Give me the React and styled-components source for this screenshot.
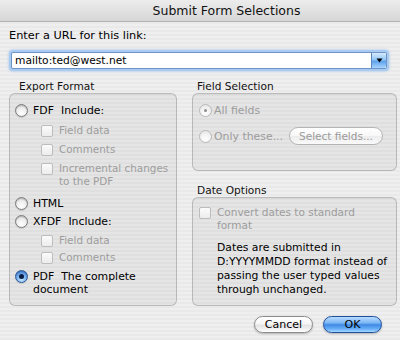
import React from 'react';
import styled, { createGlobalStyle } from 'styled-components';

const GlobalStyle = createGlobalStyle`
  *, *::before, *::after { box-sizing: border-box; }
  html, body { margin: 0; padding: 0; }
  body {
    width: 400px;
    height: 340px;
    overflow: hidden;
    font-family: "DejaVu Sans", "Liberation Sans", sans-serif;
    -webkit-font-smoothing: antialiased;
  }
`;

const Window = styled.div`
  width: 400px;
  height: 340px;
  display: flex;
  flex-direction: column;
  color: #000;
  background: repeating-linear-gradient(
    to bottom,
    #efefef 0px,
    #efefef 2px,
    #e9e9e9 2px,
    #e9e9e9 4px
  );
`;

const TitleBar = styled.div`
  flex: none;
  height: 22px;
  padding-left: 53px;
  display: flex;
  align-items: center;
  justify-content: center;
  font-size: 12.5px;
  color: #111;
  border-bottom: 1px solid #b2b2b2;
  background: linear-gradient(#ededed, #d6d6d6);
`;

const Body = styled.div`
  display: flex;
  flex-direction: column;
  padding: 7px 0 0 9px;
`;

const UrlLabel = styled.div`
  font-size: 11.3px;
  line-height: 14px;
`;

const Combo = styled.div`
  margin: 9px 0 0 2px;
  width: 376px;
  height: 17px;
  display: flex;
  align-items: stretch;
  background: #fff;
  border: 1px solid #6f93c4;
  border-radius: 2px;
  box-shadow: 0 0 0 2px #a9cbf1, 0 0 2px 3px rgba(150, 190, 235, 0.45);
`;

const ComboText = styled.div`
  flex: 1;
  padding-left: 3px;
  font-size: 10.7px;
  line-height: 15px;
`;

const ComboButton = styled.div`
  width: 15px;
  flex: none;
  display: flex;
  align-items: center;
  justify-content: center;
  border-left: 1px solid #5c86c2;
  border-radius: 0 2px 2px 0;
  background: linear-gradient(#d4ebff 0%, #93c6f5 45%, #5fa2ea 55%, #a6d4ff 100%);
`;

const Columns = styled.div`
  display: flex;
  gap: 15px;
  margin-top: 10px;
`;

const Column = styled.div`
  display: flex;
  flex-direction: column;
  width: ${(p) => p.$width}px;
  flex: none;
`;

const GroupLabel = styled.div`
  font-size: 10.6px;
  line-height: 14px;
  padding-left: ${(p) => p.$indent}px;
  margin-top: ${(p) => p.$top || 0}px;
  color: #111;
`;

const GroupBox = styled.div`
  height: ${(p) => p.$height}px;
  display: flex;
  flex-direction: column;
  align-items: flex-start;
  padding: ${(p) => p.$padTop}px 0 0 ${(p) => p.$padLeft ?? 6}px;
  border: 1px solid rgba(0, 0, 0, 0.19);
  border-radius: 6px;
  background: rgba(0, 0, 0, 0.04);
  box-shadow: inset 0 1px 1px rgba(0, 0, 0, 0.04);
`;

const RadioRow = styled.div`
  display: flex;
  align-items: flex-start;
  gap: ${(p) => p.$gap ?? 5}px;
  margin-top: ${(p) => p.$top || 0}px;
  font-size: 10.9px;
  line-height: 13px;
  color: ${(p) => (p.$disabled ? '#9c9c9c' : '#000')};
`;

const RadioCircle = styled.span`
  flex: none;
  width: 13px;
  height: 13px;
  margin-top: 0;
  border-radius: 50%;
  display: flex;
  align-items: center;
  justify-content: center;
  border: 1px solid
    ${(p) => (p.$checked && !p.$disabled ? '#2c5594' : p.$disabled ? '#b9b9b9' : '#7b7b7b')};
  background: ${(p) =>
    p.$checked && !p.$disabled
      ? 'radial-gradient(circle at 50% 80%, #c4e6ff 0%, #78b4f0 45%, #3572cf 100%)'
      : p.$disabled
      ? 'radial-gradient(circle at 50% 75%, #ffffff 0%, #f1f1f1 55%, #dedede 100%)'
      : 'radial-gradient(circle at 50% 75%, #ffffff 0%, #ececec 55%, #c9c9c9 100%)'};
  box-shadow: ${(p) => (p.$disabled ? 'none' : 'inset 0 1px 1px rgba(0,0,0,0.18), 0 1px 1px rgba(0,0,0,0.12)')};

  &::after {
    content: '';
    display: ${(p) => (p.$checked ? 'block' : 'none')};
    width: ${(p) => (p.$disabled ? 3 : 5)}px;
    height: ${(p) => (p.$disabled ? 3 : 5)}px;
    border-radius: 50%;
    background: ${(p) => (p.$disabled ? '#8d8d8d' : '#0b1c45')};
  }
`;

const CheckRow = styled.div`
  display: flex;
  align-items: flex-start;
  gap: 6px;
  margin-top: ${(p) => p.$top || 0}px;
  margin-left: ${(p) => p.$indent || 0}px;
  font-size: ${(p) => p.$size || 10.4}px;
  line-height: ${(p) => p.$lh || 13}px;
  color: #9d9d9d;
`;

const CheckBox = styled.span`
  flex: none;
  width: 12px;
  height: 12px;
  margin-top: 0.5px;
  border: 1px solid #bdbdbd;
  border-radius: 2px;
  background: linear-gradient(#fbfbfb, #ececec);
`;

const Gap = styled.span`
  display: inline-block;
  width: ${(p) => p.$w}px;
`;

const SmallButton = styled.div`
  margin-left: 4px;
  margin-top: -3px;
  height: 18px;
  padding: 0 9px;
  display: flex;
  align-items: center;
  border: 1px solid #b4b4b4;
  border-radius: 9px;
  background: linear-gradient(#ffffff 0%, #f7f7f7 50%, #ececec 51%, #fafafa 100%);
  color: #9a9a9a;
  font-size: 10.5px;
`;

const Note = styled.div`
  margin: 8px 0 0 18px;
  font-size: 10.8px;
  line-height: 14.2px;
  color: #000;
`;

const ButtonRow = styled.div`
  display: flex;
  justify-content: flex-end;
  gap: 10px;
  margin-top: 10px;
  padding-right: 18px;
`;

const PushButton = styled.div`
  width: 59px;
  height: 17px;
  display: flex;
  align-items: center;
  justify-content: center;
  border-radius: 9px;
  font-size: 11px;
  color: #000;
  border: 1px solid ${(p) => (p.$primary ? '#1f4f9c' : '#8a8a8a')};
  background: ${(p) =>
    p.$primary
      ? 'linear-gradient(#b9dcff 0%, #7ab6f4 40%, #3f89e4 52%, #69b0fa 80%, #a8d8ff 100%)'
      : 'linear-gradient(#ffffff 0%, #f6f6f6 45%, #e3e3e3 55%, #f4f4f4 85%, #ffffff 100%)'};
  box-shadow: 0 1px 2px rgba(0, 0, 0, 0.25);
`;

export default function App() {
  return (
    <>
      <GlobalStyle />
      <Window>
        <TitleBar>Submit Form Selections</TitleBar>
        <Body>
          <UrlLabel>Enter a URL for this link:</UrlLabel>
          <Combo>
            <ComboText>mailto:ted@west.net</ComboText>
            <ComboButton>
              <svg width="7" height="5" viewBox="0 0 7 5">
                <path d="M0.5 0.5 L6.5 0.5 L3.5 4.5 Z" fill="#000" />
              </svg>
            </ComboButton>
          </Combo>
          <Columns>
            <Column $width={168}>
              <GroupLabel $indent={10}>Export Format</GroupLabel>
              <GroupBox $height={213} $padTop={10} $padLeft={5}>
                <RadioRow>
                  <RadioCircle />
                  <span>
                    FDF<Gap $w={7} />Include:
                  </span>
                </RadioRow>
                <CheckRow $top={7} $indent={26}>
                  <CheckBox />
                  <span>Field data</span>
                </CheckRow>
                <CheckRow $top={6} $indent={26}>
                  <CheckBox />
                  <span>Comments</span>
                </CheckRow>
                <CheckRow $top={6} $indent={26}>
                  <CheckBox />
                  <span>
                    Incremental changes
                    <br />
                    to the PDF
                  </span>
                </CheckRow>
                <RadioRow $top={9}>
                  <RadioCircle />
                  <span>HTML</span>
                </RadioRow>
                <RadioRow $top={5}>
                  <RadioCircle />
                  <span>
                    XFDF<Gap $w={7} />Include:
                  </span>
                </RadioRow>
                <CheckRow $top={6} $indent={26}>
                  <CheckBox />
                  <span>Field data</span>
                </CheckRow>
                <CheckRow $top={4} $indent={26}>
                  <CheckBox />
                  <span>Comments</span>
                </CheckRow>
                <RadioRow $top={6}>
                  <RadioCircle $checked />
                  <span>
                    PDF<Gap $w={7} />The complete
                    <br />
                    document
                  </span>
                </RadioRow>
              </GroupBox>
            </Column>
            <Column $width={205}>
              <GroupLabel $indent={5}>Field Selection</GroupLabel>
              <GroupBox $height={78} $padTop={10}>
                <RadioRow $disabled $gap={2}>
                  <RadioCircle $checked $disabled />
                  <span>All fields</span>
                </RadioRow>
                <RadioRow $disabled $gap={2} $top={13}>
                  <RadioCircle $disabled />
                  <span>Only these...</span>
                  <SmallButton>Select fields...</SmallButton>
                </RadioRow>
              </GroupBox>
              <GroupLabel $indent={5} $top={12}>
                Date Options
              </GroupLabel>
              <GroupBox $height={109} $padTop={8}>
                <CheckRow $size={10.5} $lh={13.3}>
                  <CheckBox />
                  <span>
                    Convert dates to standard
                    <br />
                    format
                  </span>
                </CheckRow>
                <Note>
                  Dates are submitted in
                  <br />
                  D:YYYYMMDD format instead of
                  <br />
                  passing the user typed values
                  <br />
                  through unchanged.
                </Note>
              </GroupBox>
            </Column>
          </Columns>
          <ButtonRow>
            <PushButton>Cancel</PushButton>
            <PushButton $primary>OK</PushButton>
          </ButtonRow>
        </Body>
      </Window>
    </>
  );
}
